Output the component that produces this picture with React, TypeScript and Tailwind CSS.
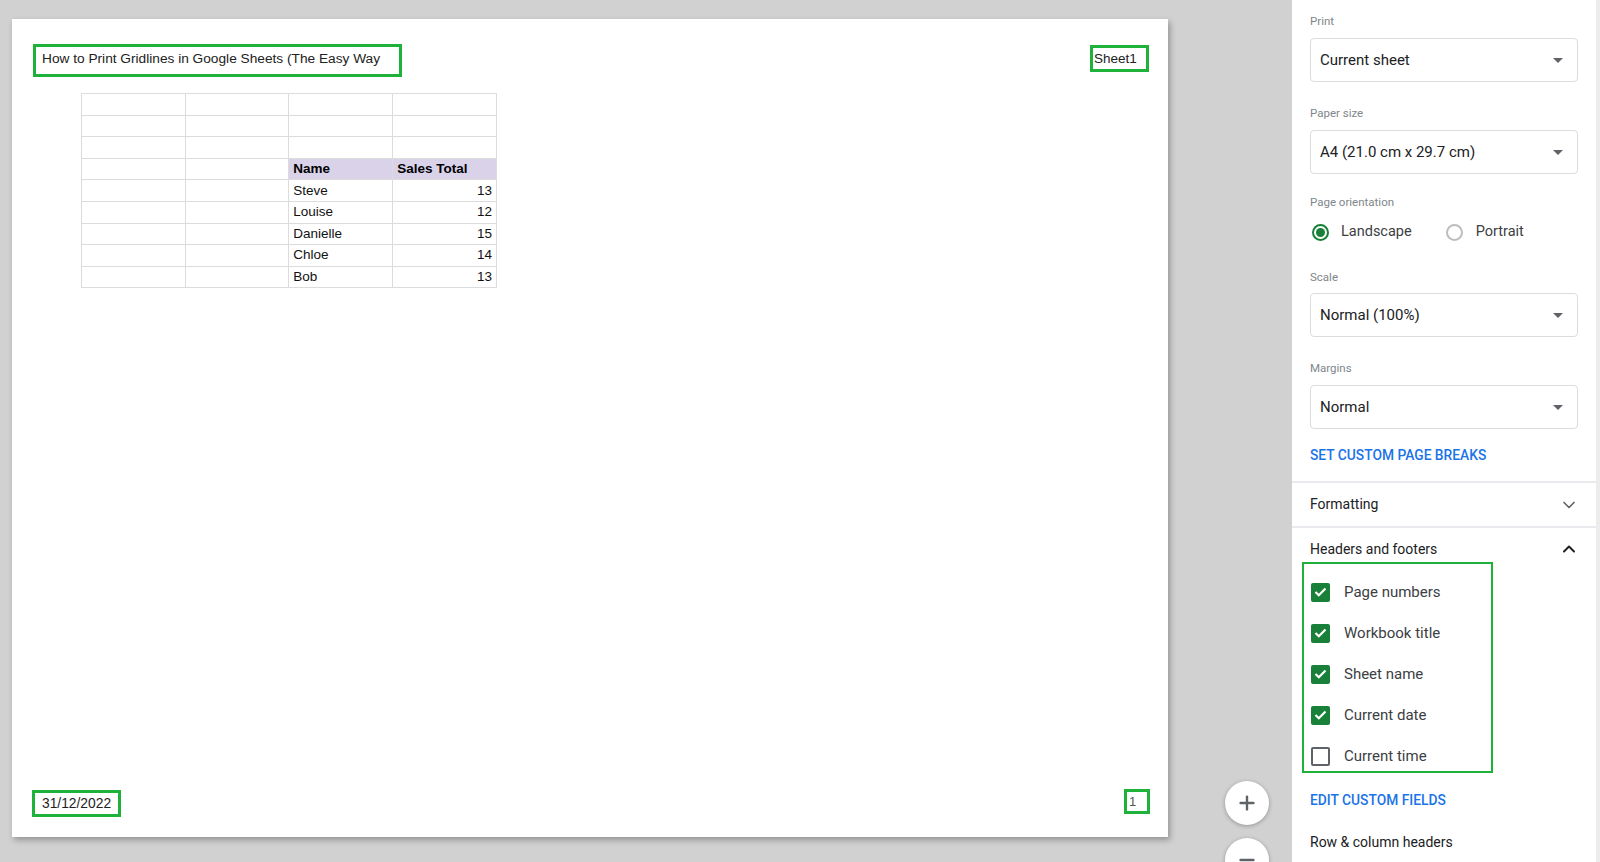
import { Plus, Minus, ChevronDown, ChevronUp } from 'lucide-react';

const rows: [string, string][] = [
  ['', ''],
  ['', ''],
  ['', ''],
  ['Name', 'Sales Total'],
  ['Steve', '13'],
  ['Louise', '12'],
  ['Danielle', '15'],
  ['Chloe', '14'],
  ['Bob', '13'],
];

function Caret() {
  return (
    <svg width="10" height="5" viewBox="0 0 10 5" className="shrink-0">
      <path d="M0 0 L10 0 L5 5 Z" fill="#5f6368" />
    </svg>
  );
}

function Select({ value }: { value: string }) {
  return (
    <div className="h-[44px] mr-[18px] flex items-center justify-between border border-[#dadce0] rounded-[4px] pl-[9px] pr-[14px] text-[15px] text-[#202124]">
      <span>{value}</span>
      <Caret />
    </div>
  );
}

function Label({ children, className }: { children: string; className?: string }) {
  return <div className={`text-[11.5px] leading-[14px] text-[#80868b] ${className ?? ''}`}>{children}</div>;
}

function Checkbox({ checked, label }: { checked: boolean; label: string }) {
  return (
    <div className="h-[22px] flex items-center">
      {checked ? (
        <div className="w-[19px] h-[19px] rounded-[2px] bg-[#188038] flex items-center justify-center">
          <svg width="13" height="10" viewBox="0 0 13 10">
            <path d="M1.5 5 L4.8 8.2 L11.5 1.5" stroke="white" strokeWidth="2.2" fill="none" />
          </svg>
        </div>
      ) : (
        <div className="w-[19px] h-[19px] rounded-[2px] border-2 border-[#5f6368]" />
      )}
      <span className="ml-[14px] text-[15px] text-[#3c4043]">{label}</span>
    </div>
  );
}

export default function App() {
  return (
    <div className="w-[1600px] h-[862px] flex bg-[#d1d1d1] overflow-hidden">
      {/* preview area */}
      <div className="relative w-[1292px] h-full pl-[12px] pt-[19px]">
        <div
          className="w-[1156px] h-[818px] bg-white shadow-[2px_3px_6px_rgba(0,0,0,0.3)] flex flex-col text-black"
          style={{ fontFamily: '"Liberation Sans", Arial, sans-serif' }}
        >
          <div className="flex justify-between pt-[25px] pl-[21px] pr-[19px]">
            <div className="w-[369px] h-[33px] border-[3px] border-[#1fb23a] pl-[6px] pt-[2px] text-[13.7px] text-[#222]">
              How to Print Gridlines in Google Sheets (The Easy Way
            </div>
            <div className="mt-[1px] w-[59px] h-[27px] border-[3px] border-[#1fb23a] pl-[1px] pt-[1px] text-[13.5px] text-[#222]">
              Sheet1
            </div>
          </div>

          <table className="ml-[69px] mt-[16px] border-collapse w-[416px] text-[13.5px]">
            <tbody>
              {rows.map(([name, total], i) => {
                const head = name === 'Name';
                return (
                  <tr key={i} className="h-[21.6px]">
                    <td className="w-[104px] border border-[#dcdcdc] p-0" />
                    <td className="w-[104px] border border-[#dcdcdc] p-0" />
                    <td className={`w-[104px] border border-[#dcdcdc] px-[4px] py-0 leading-[18px] ${head ? 'bg-[#d9d2e9] font-bold' : 'text-[#111]'}`}>
                      {name}
                    </td>
                    <td className={`w-[104px] border border-[#dcdcdc] px-[4px] py-0 leading-[18px] ${head ? 'bg-[#d9d2e9] font-bold text-left' : 'text-right text-[#111]'}`}>
                      {total}
                    </td>
                  </tr>
                );
              })}
            </tbody>
          </table>

          <div className="mt-auto flex justify-between items-end pl-[20px] pr-[18px] pb-[20px]">
            <div className="w-[89px] h-[27px] border-[3px] border-[#1fb23a] pl-[7px] pt-[1px] text-[13.8px] text-[#222]">
              31/12/2022
            </div>
            <div className="mb-[3px] w-[26px] h-[25px] border-[3px] border-[#1fb23a] pl-[2px] text-[13px] text-[#555]">
              1
            </div>
          </div>
        </div>

        {/* zoom buttons */}
        <div className="absolute left-[1225px] top-[781px] w-[44px] h-[44px] rounded-full bg-white shadow-[0_1px_4px_rgba(0,0,0,0.3)] flex items-center justify-center">
          <Plus size={22} strokeWidth={2.6} color="#5f6368" />
        </div>
        <div className="absolute left-[1225px] top-[838px] w-[44px] h-[44px] rounded-full bg-white shadow-[0_1px_4px_rgba(0,0,0,0.3)] flex items-center justify-center">
          <Minus size={22} strokeWidth={2.6} color="#5f6368" />
        </div>
      </div>

      {/* settings panel */}
      <div
        className="w-[308px] h-full bg-white border-r-[4px] border-[#ececec] flex flex-col"
        style={{ fontFamily: 'Roboto, "Noto Sans", sans-serif' }}
      >
        <div className="pl-[18px] pt-[14px] pb-[16px]">
          <Label>Print</Label>
          <div className="mt-[10px]"><Select value="Current sheet" /></div>
          <Label className="mt-[24px]">Paper size</Label>
          <div className="mt-[10px]"><Select value="A4 (21.0 cm x 29.7 cm)" /></div>
          <Label className="mt-[21px]">Page orientation</Label>
          <div className="mt-[13px] h-[20px] flex items-center text-[14.5px] text-[#3c4043]">
            <div className="w-[17px] h-[17px] ml-[2px] rounded-full border-2 border-[#188038] flex items-center justify-center">
              <div className="w-[9px] h-[9px] rounded-full bg-[#188038]" />
            </div>
            <span className="ml-[12px]">Landscape</span>
            <div className="w-[17px] h-[17px] ml-[34px] rounded-full border-2 border-[#bdbdbd]" />
            <span className="ml-[13px]">Portrait</span>
          </div>
          <Label className="mt-[28px]">Scale</Label>
          <div className="mt-[9px]"><Select value="Normal (100%)" /></div>
          <Label className="mt-[24px]">Margins</Label>
          <div className="mt-[10px]"><Select value="Normal" /></div>
          <div className="mt-[16px] text-[13.8px] leading-[20px] font-medium text-[#1a73e8]">
            SET CUSTOM PAGE BREAKS
          </div>
        </div>

        <div className="border-t-[2px] border-[#e8eaed] h-[45px] flex items-center justify-between pl-[18px] pr-[17px]">
          <span className="text-[14px] text-[#202124]">Formatting</span>
          <ChevronDown size={20} color="#5f6368" strokeWidth={2} />
        </div>

        <div className="border-t-[2px] border-[#e8eaed] pl-[18px] pt-[11px]">
          <div className="flex items-center justify-between pr-[17px] h-[20px]">
            <span className="text-[14px] text-[#202124]">Headers and footers</span>
            <ChevronUp size={20} color="#202124" strokeWidth={2.4} />
          </div>
          <div className="-ml-[8px] mt-[3px] w-[191px] border-2 border-[#1fb23a] pl-[7px] pt-[17px] pb-[4px] flex flex-col gap-[19px]">
            <Checkbox checked label="Page numbers" />
            <Checkbox checked label="Workbook title" />
            <Checkbox checked label="Sheet name" />
            <Checkbox checked label="Current date" />
            <Checkbox checked={false} label="Current time" />
          </div>
          <div className="mt-[17px] text-[13.8px] leading-[20px] font-medium text-[#1a73e8]">
            EDIT CUSTOM FIELDS
          </div>
          <div className="mt-[22px] text-[14px] leading-[20px] text-[#202124]">Row &amp; column headers</div>
        </div>
      </div>
    </div>
  );
}
